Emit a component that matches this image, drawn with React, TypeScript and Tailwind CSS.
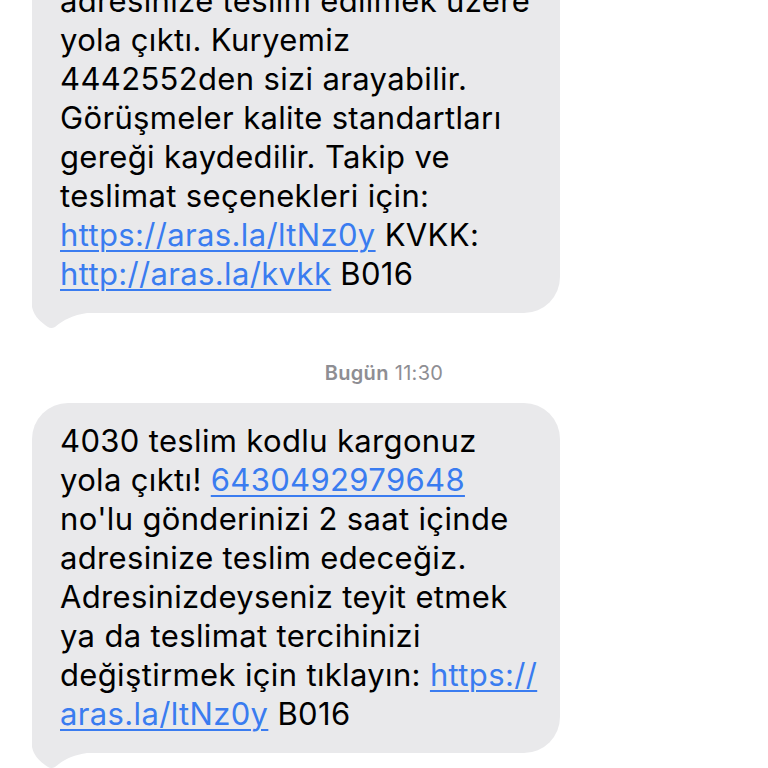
import type { ReactNode } from 'react';

const font = { fontFamily: 'Inter, "Noto Sans", sans-serif' };

function Link({ children }: { children: ReactNode }) {
  return (
    <span className="text-[#3a7cf0] underline decoration-[1.5px] underline-offset-[4px]">{children}</span>
  );
}

function Tail() {
  return (
    <svg
      className="absolute left-0 bottom-[-16px]"
      width="60"
      height="56"
      viewBox="0 0 60 56"
      fill="#e9e9eb"
    >
      <path d="M0 0 L0 34 C2 44 10 50 16 54 Q19 56 23 54 C31 47 41 42 55 40 L55 0 Z" />
    </svg>
  );
}

function Bubble({ lines, className }: { lines: ReactNode[]; className?: string }) {
  return (
    <div className={`relative w-[528px] rounded-[36px] bg-[#e9e9eb] px-[28px] ${className ?? ''}`}>
      <Tail />
      <div className="relative text-[31px] leading-[39px] text-black tracking-[0.35px]">
        {lines.map((l, i) => (
          <div key={i} className="whitespace-nowrap">
            {l}
          </div>
        ))}
      </div>
    </div>
  );
}

export default function App() {
  return (
    <div className="h-[768px] w-[768px] overflow-hidden bg-white" style={font}>
      <div className="flex flex-col pl-[32px] mt-[-78px]">
        <Bubble
          className="pt-[20px] pb-[20px]"
          lines={[
            "no'lu gönderiniz",
            'adresinize teslim edilmek üzere',
            'yola çıktı. Kuryemiz',
            '4442552den sizi arayabilir.',
            'Görüşmeler kalite standartları',
            'gereği kaydedilir. Takip ve',
            'teslimat seçenekleri için:',
            <>
              <Link>https://aras.la/ltNz0y</Link> KVKK:
            </>,
            <>
              <Link>http://aras.la/kvkk</Link> B016
            </>,
          ]}
        />
        <div className="flex justify-center w-[704px] mt-[48px] mb-[18px] text-[20px] leading-[24px] tracking-[0.3px] text-[#8e8e93]">
          <span className="font-semibold">Bugün</span>
          <span className="ml-[6px]">11:30</span>
        </div>
        <Bubble
          className="pt-[18px] pb-[20px]"
          lines={[
            '4030 teslim kodlu kargonuz',
            <>
              yola çıktı! <Link>6430492979648</Link>
            </>,
            "no'lu gönderinizi 2 saat içinde",
            'adresinize teslim edeceğiz.',
            'Adresinizdeyseniz teyit etmek',
            'ya da teslimat tercihinizi',
            <>
              değiştirmek için tıklayın: <Link>https://</Link>
            </>,
            <>
              <Link>aras.la/ltNz0y</Link> B016
            </>,
          ]}
        />
      </div>
    </div>
  );
}
